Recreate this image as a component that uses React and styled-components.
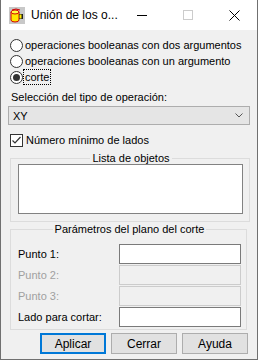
import React from 'react';
import styled, { createGlobalStyle } from 'styled-components';

const GlobalStyle = createGlobalStyle`
  html, body { margin: 0; padding: 0; background: #ffffff; }
  body { font-family: "Liberation Sans", Arial, sans-serif; font-size: 11px; color: #000; }
  * { box-sizing: border-box; }
`;

const Window = styled.div`
  width: 258px;
  height: 360px;
  border: 1px solid #707070;
  border-top: none;
  background: #f0f0f0;
  display: flex;
  flex-direction: column;
`;

const TitleBar = styled.div`
  height: 30px;
  background: #fff;
  display: flex;
  align-items: center;
  flex-shrink: 0;
`;

const AppIcon = styled.svg`
  margin-left: 8px;
  margin-right: 6px;
  flex-shrink: 0;
`;

const Title = styled.span`
  flex: 1;
  font-size: 12px;
  white-space: nowrap;
`;

const CaptionButton = styled.div`
  width: 46px;
  height: 30px;
  display: flex;
  align-items: center;
  justify-content: center;
`;

const Content = styled.div`
  padding: 7px 9px 0 9px;
  display: flex;
  flex-direction: column;
`;

const OptionRow = styled.label`
  height: 16px;
  display: flex;
  align-items: center;
  white-space: nowrap;
`;

const RadioCircle = styled.span`
  width: 13px;
  height: 13px;
  border-radius: 50%;
  border: 1px solid #333;
  background: #fff;
  margin-right: 1px;
  display: flex;
  align-items: center;
  justify-content: center;
  flex-shrink: 0;
  &::after {
    content: '';
    width: 7px;
    height: 7px;
    border-radius: 50%;
    background: ${p => (p.$checked ? '#333' : 'transparent')};
  }
`;

const OptionText = styled.span`
  padding: 0 1px;
  line-height: 14px;
  outline: ${p => (p.$focused ? '1px dotted #000' : 'none')};
`;

const FieldLabel = styled.div`
  margin-top: 4px;
  height: 16px;
  line-height: 16px;
  padding-left: 1px;
`;

const Select = styled.div`
  margin: 1px 0 0 -2px;
  width: 242px;
  height: 19px;
  border: 1px solid #adadad;
  background: #e5e5e5;
  display: flex;
  align-items: center;
  justify-content: space-between;
  padding: 0 6px 0 4px;
`;

const CheckRow = styled.label`
  margin-top: 7px;
  height: 16px;
  display: flex;
  align-items: center;
  gap: 3px;
`;

const CheckBox = styled.span`
  width: 13px;
  height: 13px;
  border: 1px solid #333;
  background: #fff;
  display: flex;
  align-items: center;
  justify-content: center;
  flex-shrink: 0;
`;

const Group = styled.fieldset`
  margin: ${p => p.$top}px 0 0 0;
  width: ${p => p.$width}px;
  border: 1px solid #dcdcdc;
  padding: 0 5px ${p => p.$bottom}px 7px;
  min-width: 0;
`;

const Legend = styled.legend`
  margin: 0 auto;
  padding: 0 2px;
  line-height: 14px;
  font-size: 11px;
`;

const ListBox = styled.div`
  margin-top: -1px;
  width: 225px;
  height: 50px;
  border: 1px solid #828282;
  background: #fff;
`;

const ParamRows = styled.div`
  margin-top: 8px;
  display: flex;
  flex-direction: column;
  gap: 1px;
`;

const ParamRow = styled.div`
  height: 20px;
  display: flex;
  align-items: center;
  justify-content: space-between;
  color: ${p => (p.$disabled ? '#a0a0a0' : '#000')};
`;

const TextInput = styled.div`
  width: 122px;
  height: 20px;
  border: 1px solid ${p => (p.$disabled ? '#cccccc' : '#7a7a7a')};
  background: ${p => (p.$disabled ? '#f0f0f0' : '#fff')};
`;

const ButtonBar = styled.div`
  margin-top: 3px;
  display: flex;
  justify-content: flex-end;
  gap: 5px;
`;

const Button = styled.div`
  width: 66px;
  height: 21px;
  font-size: 12px;
  background: #e1e1e1;
  border: ${p => (p.$default ? '2px solid #0078d7' : '1px solid #adadad')};
  display: flex;
  align-items: center;
  justify-content: center;
`;

const params = [
  { label: 'Punto 1:', disabled: false },
  { label: 'Punto 2:', disabled: true },
  { label: 'Punto 3:', disabled: true },
  { label: 'Lado para cortar:', disabled: false },
];

export default function App() {
  return (
    <>
      <GlobalStyle />
      <Window>
        <TitleBar>
          <AppIcon width="16" height="17" viewBox="0 0 16 17">
            <rect x="0" y="0" width="16" height="17" fill="#c8c8c8" />
            <path d="M2 5 L2 13 Q2 15 6 15 Q10 15 10 13 L10 5 Z" fill="#ffe800" stroke="#d00000" strokeWidth="1" />
            <ellipse cx="6" cy="5" rx="4" ry="2" fill="#ffff40" stroke="#d00000" strokeWidth="1" />
            <path d="M3 3 L7 2 L11 3" fill="none" stroke="#d00000" strokeWidth="1" />
            <rect x="10" y="7" width="4" height="5" fill="#222" />
            <rect x="10.5" y="7.5" width="2" height="4" fill="#ffe800" />
          </AppIcon>
          <Title>Unión de los o...</Title>
          <CaptionButton>
            <svg width="10" height="10" viewBox="0 0 10 10">
              <path d="M0 5.5 H10" stroke="#000" strokeWidth="1" />
            </svg>
          </CaptionButton>
          <CaptionButton>
            <svg width="10" height="10" viewBox="0 0 10 10">
              <rect x="0.5" y="0.5" width="9" height="9" fill="none" stroke="#cccccc" strokeWidth="1" />
            </svg>
          </CaptionButton>
          <CaptionButton>
            <svg width="11" height="11" viewBox="0 0 11 11">
              <path d="M0.5 0.5 L10.5 10.5 M10.5 0.5 L0.5 10.5" stroke="#000" strokeWidth="1" />
            </svg>
          </CaptionButton>
        </TitleBar>
        <Content>
          <OptionRow>
            <RadioCircle />
            <OptionText>operaciones booleanas con dos argumentos</OptionText>
          </OptionRow>
          <OptionRow>
            <RadioCircle />
            <OptionText>operaciones booleanas con un argumento</OptionText>
          </OptionRow>
          <OptionRow>
            <RadioCircle $checked />
            <OptionText $focused>corte</OptionText>
          </OptionRow>

          <FieldLabel>Selección del tipo de operación:</FieldLabel>
          <Select>
            <span>XY</span>
            <svg width="8" height="5" viewBox="0 0 8 5">
              <path d="M0.5 0.5 L4 4 L7.5 0.5" fill="none" stroke="#555" strokeWidth="1" />
            </svg>
          </Select>

          <CheckRow>
            <CheckBox>
              <svg width="11" height="11" viewBox="0 0 11 11">
                <path d="M1.5 5.5 L4 8 L9.5 2" fill="none" stroke="#333" strokeWidth="1.2" />
              </svg>
            </CheckBox>
            <span>Número mínimo de lados</span>
          </CheckRow>

          <Group $top={3} $width={240} $bottom={7}>
            <Legend>Lista de objetos</Legend>
            <ListBox />
          </Group>

          <Group $top={0} $width={237} $bottom={2}>
            <Legend>Parámetros del plano del corte</Legend>
            <ParamRows>
              {params.map(p => (
                <ParamRow key={p.label} $disabled={p.disabled}>
                  <span>{p.label}</span>
                  <TextInput $disabled={p.disabled} />
                </ParamRow>
              ))}
            </ParamRows>
          </Group>

          <ButtonBar>
            <Button $default>Aplicar</Button>
            <Button>Cerrar</Button>
            <Button>Ayuda</Button>
          </ButtonBar>
        </Content>
      </Window>
    </>
  );
}
